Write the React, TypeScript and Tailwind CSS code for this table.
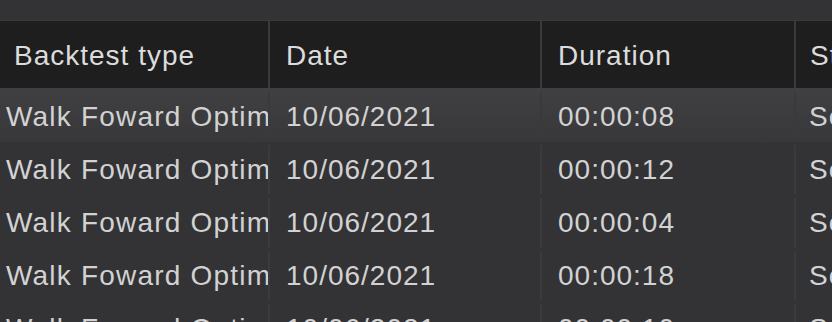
const rows = [
  { type: 'Walk Foward Optimization', date: '10/06/2021', duration: '00:00:08', status: 'Second' },
  { type: 'Walk Foward Optimization', date: '10/06/2021', duration: '00:00:12', status: 'Second' },
  { type: 'Walk Foward Optimization', date: '10/06/2021', duration: '00:00:04', status: 'Second' },
  { type: 'Walk Foward Optimization', date: '10/06/2021', duration: '00:00:18', status: 'Second' },
  { type: 'Walk Foward Optimization', date: '10/06/2021', duration: '00:00:10', status: 'Second' },
]

export default function App() {
  return (
    <div
      className="w-[832px] h-[322px] overflow-hidden bg-[#333336] text-[28px] leading-none tracking-[1px] text-[#d2d2d2]"
      style={{ fontFamily: '"Liberation Sans", Arial, sans-serif' }}
    >
      <div className="h-[21px] bg-[#333336] border-b border-[#3a3a3d]" />

      {/* header */}
      <div className="flex h-[67px] bg-[#1e1e1e] text-[#dcdcdc]">
        <div className="w-[270px] shrink-0 flex items-center pt-[2px] pl-[14px] border-r-2 border-[#3a3a3c]">
          Backtest type
        </div>
        <div className="w-[272px] shrink-0 flex items-center pt-[2px] pl-4 border-r-2 border-[#3a3a3c]">Date</div>
        <div className="w-[254px] shrink-0 flex items-center pt-[2px] pl-4 border-r-2 border-[#3a3a3c]">Duration</div>
        <div className="flex-1 min-w-0 flex items-center pt-[2px] pl-[14px] whitespace-nowrap overflow-hidden">Status</div>
      </div>

      {/* body */}
      <div className="flex flex-col">
        {rows.map((r, i) => (
          <div
            key={i}
            className={
              i === 0
                ? 'flex h-[54px] pt-[3px] bg-gradient-to-b from-[#404043] to-[#38383b]'
                : 'flex h-[53px] pt-[3px]'
            }
          >
            <div className="w-[270px] shrink-0 flex items-center pl-[6px] tracking-[1.2px] overflow-hidden whitespace-nowrap border-r-2 border-[#3a3a3d]">
              {r.type}
            </div>
            <div className="w-[272px] shrink-0 flex items-center pl-4 border-r-2 border-[#3a3a3d]">{r.date}</div>
            <div className="w-[254px] shrink-0 flex items-center pl-4 border-r-2 border-[#3a3a3d]">{r.duration}</div>
            <div className="flex-1 min-w-0 flex items-center pl-[13px] whitespace-nowrap overflow-hidden">{r.status}</div>
          </div>
        ))}
      </div>
    </div>
  )
}
